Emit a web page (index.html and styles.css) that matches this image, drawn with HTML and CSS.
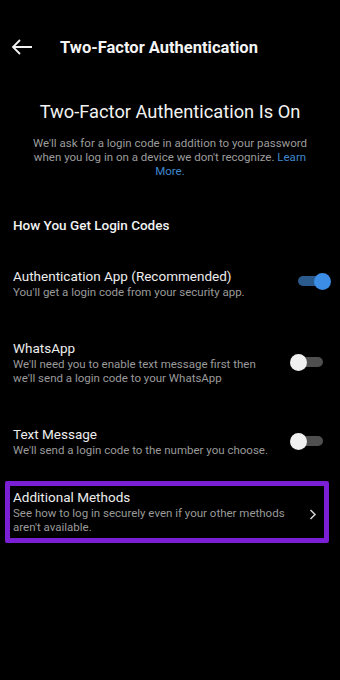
FILE: index.html
```html
<!DOCTYPE html>
<html>
<head>
  <title>Two-Factor Authentication</title>
  <link rel="stylesheet" href="styles.css">
</head>
<body>
  <div class="header">
    <svg class="back" width="22" height="16" viewBox="0 0 22 16">
      <path d="M21 8H2M9 1L2 8l7 7" fill="none" stroke="#f2f2f2" stroke-width="1.8"/>
    </svg>
    <div class="header-title">Two-Factor Authentication</div>
  </div>

  <h1 class="heading">Two-Factor Authentication Is On</h1>
  <p class="intro">We'll ask for a login code in addition to your password<br>when you log in on a device we don't recognize. <span class="link">Learn</span><br><span class="link">More.</span></p>

  <div class="section-title">How You Get Login Codes</div>

  <div class="option first">
    <div class="option-text">
      <div class="option-name">Authentication App (Recommended)</div>
      <div class="option-desc">You'll get a login code from your security app.</div>
    </div>
    <div class="toggle on"><span class="knob"></span></div>
  </div>

  <div class="option">
    <div class="option-text">
      <div class="option-name">WhatsApp</div>
      <div class="option-desc">We'll need you to enable text message first then<br>we'll send a login code to your WhatsApp</div>
    </div>
    <div class="toggle"><span class="knob"></span></div>
  </div>

  <div class="option">
    <div class="option-text">
      <div class="option-name">Text Message</div>
      <div class="option-desc">We'll send a login code to the number you choose.</div>
    </div>
    <div class="toggle"><span class="knob"></span></div>
  </div>

  <div class="more-box">
    <div class="option-text">
      <div class="option-name">Additional Methods</div>
      <div class="option-desc">See how to log in securely even if your other methods<br>aren't available.</div>
    </div>
    <svg class="chevron" width="8" height="11" viewBox="0 0 8 11">
      <path d="M1.5 1l4.5 4.5-4.5 4.5" fill="none" stroke="#cfcfcf" stroke-width="1.6"/>
    </svg>
  </div>
</body>
</html>
```

FILE: styles.css
```css
body {
  margin: 0;
  background: #000;
  color: #f2f2f2;
  font-family: Roboto, "Liberation Sans", sans-serif;
  width: 340px;
}
.header {
  display: flex;
  align-items: center;
  height: 94px;
  padding-left: 11px;
}
.back {
  margin-right: 27px;
}
.header-title {
  font-size: 16.5px;
  font-weight: bold;
  color: #f4f4f4;
}
.heading {
  margin: 6px 0 0;
  text-align: center;
  font-size: 18.3px;
  font-weight: normal;
  line-height: 24px;
  color: #f2f2f2;
}
.intro {
  margin: 12px 20px 0;
  text-align: center;
  font-size: 11.5px;
  line-height: 14px;
  color: #9c9c9c;
}
.link {
  color: #3f86cc;
}
.section-title {
  margin: 38px 13px 0;
  font-size: 13.5px;
  font-weight: 500;
  line-height: 18px;
  color: #f2f2f2;
}
.option {
  display: flex;
  align-items: center;
  justify-content: space-between;
  margin: 40px 15px 0 13px;
}
.option.first {
  margin-top: 33px;
}
.option-name {
  font-size: 13.5px;
  line-height: 18px;
  color: #ededed;
}
.option-desc {
  font-size: 11.5px;
  line-height: 14px;
  color: #9a9a9a;
}
.toggle {
  position: relative;
  width: 27px;
  height: 10px;
  border-radius: 5px;
  background: #4f4f4f;
  margin-right: 2px;
}
.toggle .knob {
  position: absolute;
  top: -3.5px;
  left: -6px;
  width: 17px;
  height: 17px;
  border-radius: 50%;
  background: #f0f0f0;
}
.toggle.on {
  background: #2b5a8c;
  margin-right: 0;
  margin-top: -4px;
}
.toggle.on .knob {
  left: auto;
  right: -6px;
  background: #3b8de6;
}
.more-box {
  display: flex;
  align-items: center;
  justify-content: space-between;
  margin: 24px 11px 0 5px;
  padding: 2px 7px 4px 3px;
  border: 5px solid #7a1fd4;
  border-radius: 2px;
}
.chevron {
  margin-top: 6px;
}
```
